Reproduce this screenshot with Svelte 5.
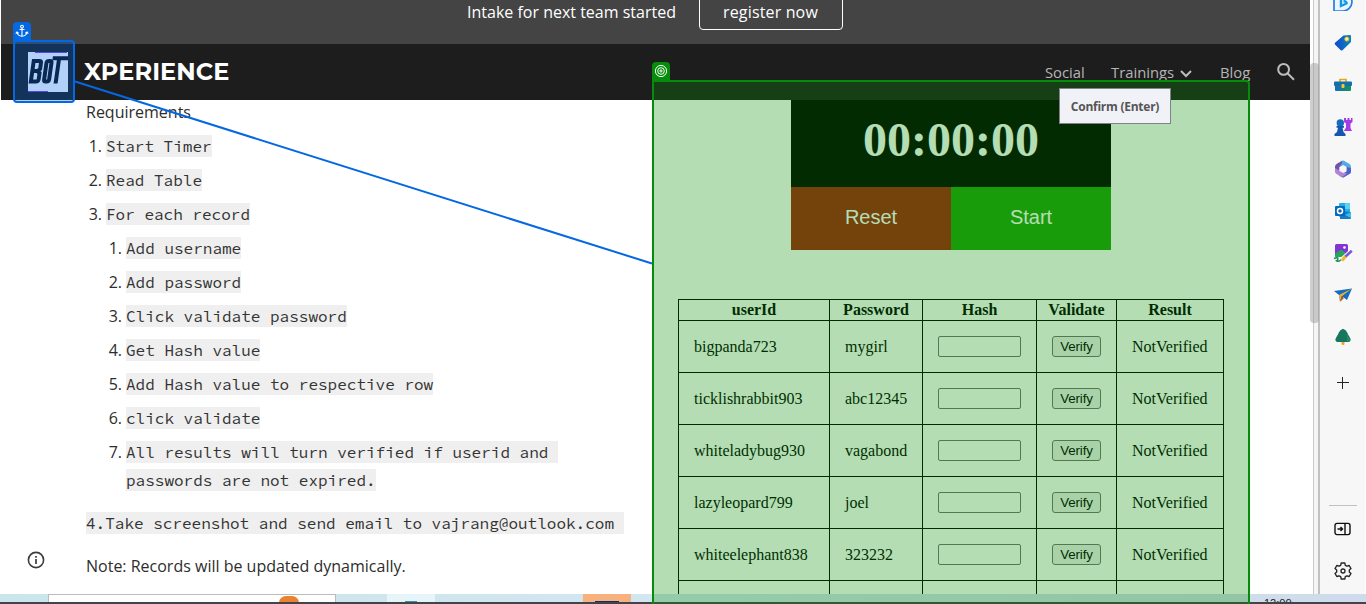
<script>
  const steps = ['Start Timer', 'Read Table', 'For each record'];
  const substeps = [
    ['Add username'], ['Add password'], ['Click validate password'], ['Get Hash value'],
    ['Add Hash value to respective row'], ['click validate'],
    ['All results will turn verified if userid and ', 'passwords are not expired.']
  ];
  const records = [
    ['bigpanda723', 'mygirl'], ['ticklishrabbit903', 'abc12345'], ['whiteladybug930', 'vagabond'],
    ['lazyleopard799', 'joel'], ['whiteelephant838', '323232']
  ];
</script>

<div class="screen">
  <div class="window">
    <main class="page">
      <div class="banner"><span>Intake for next team started</span><button class="register">register now</button></div>
      <nav>
        <svg class="logo" width="40" height="40" viewBox="0 0 40 40">
          <rect width="40" height="40" fill="#fff"/>
          <path d="M7 .5H39M0 39.5H20" stroke="#8b30f5"/>
          <g fill="none" stroke="#0d0d15" stroke-width="4" transform="translate(1.5 0) skewX(-8)">
            <path d="M5.5 8V29.5H10.5Q13 29.5 13 27V21L10.5 19L13 17V11Q13 9 11 9H3.5M5.5 19H11"/>
            <path d="M18.5 11V27.5Q18.5 29.5 20.5 29.5H21.5Q23.5 29.5 23.5 27.5V11Q23.5 9 21.5 9H20.5Q18.5 9 18.5 11Z"/>
            <path d="M24 6.2H40.5M30.5 5V31.5"/>
          </g>
        </svg>
        <b class="brand">XPERIENCE</b>
        <span class="link social">Social</span>
        <span class="link trainings">Trainings</span>
        <svg class="chev" width="14" height="10" viewBox="0 0 14 10"><path d="M2 2L7 7L12 2" fill="none" stroke="#bdbdbd" stroke-width="2"/></svg>
        <span class="link blog">Blog</span>
        <svg class="search" width="20" height="20" viewBox="0 0 20 20" fill="none" stroke="#bdbdbd" stroke-width="2"><circle cx="7.6" cy="7.4" r="5.4"/><path d="M11.5 11.3L18 17.8"/></svg>
      </nav>
      <div class="content">
        <section class="text">
          <p>Requirements</p>
          <ol>
            {#each steps as step, i}<li><span class="num">{i + 1}.</span><div><code>{step}</code></div></li>{/each}
          </ol>
          <ol class="sub">
            {#each substeps as lines, i}
              <li><span class="num">{i + 1}.</span><div>{#each lines as line}<div><code>{line}</code></div>{/each}</div></li>
            {/each}
          </ol>
          <p class="mail"><code>{'4.Take screenshot and send email to vajrang@outlook.com '}</code></p>
          <p class="note">Note: Records will be updated dynamically.</p>
        </section>
        <section class="work">
          <div class="timer">
            <div class="time">00:00:00</div>
            <div class="controls"><button class="reset">Reset</button><button class="start">Start</button></div>
          </div>
          <table>
            <colgroup><col style:width="151px"><col style:width="93px"><col style:width="114px"><col style:width="80px"><col style:width="108px"></colgroup>
            <thead><tr><th>userId</th><th>Password</th><th>Hash</th><th>Validate</th><th>Result</th></tr></thead>
            <tbody>
              {#each records as [user, pass]}
                <tr><td>{user}</td><td>{pass}</td><td><input aria-label="Hash"></td><td><button class="verify">Verify</button></td><td>NotVerified</td></tr>
              {/each}
              <tr><td></td><td></td><td></td><td></td><td></td></tr>
            </tbody>
          </table>
        </section>
      </div>
      <svg class="info" width="18" height="18" viewBox="0 0 18 18"><circle cx="9" cy="9" r="7.6" fill="none" stroke="#3c3c3c" stroke-width="1.6"/><path d="M9 8V13M9 5V6.7" stroke="#3c3c3c" stroke-width="1.7"/></svg>
    </main>
    <div class="scroll"><div class="thumb"></div></div>
    <aside>
      <div class="ic"><svg width="20" height="20" viewBox="0 0 20 20"><path d="M1 20V10A9 9 0 1 1 10 20Z" fill="#e9f7ff" stroke="#2a7de0" stroke-width="1.7"/><path d="M8 4V15L13.5 12.5Q14 10.5 10.5 10" fill="none" stroke="#1596e8" stroke-width="2.4"/></svg></div>
      <div class="ic"><svg width="18" height="18" viewBox="0 0 18 18"><defs><linearGradient id="tag"><stop stop-color="#1048cf"/><stop offset="1" stop-color="#0a86b8"/></linearGradient></defs><path d="M9.5 1.5L16 1Q17 1 17 2V8L8.5 16.3Q7.5 17 6.5 16L1 10.6Q.3 9.7 1 8.8Z" fill="url(#tag)"/><circle cx="12.8" cy="5.1" r="2" fill="#fff0a0" stroke="#f3bd20"/></svg></div>
      <div class="ic"><svg width="18" height="16" viewBox="0 0 18 16"><defs><linearGradient id="box"><stop stop-color="#176bc0"/><stop offset="1" stop-color="#12935b"/></linearGradient></defs><path d="M6 5V2.5H12V5" fill="none" stroke="#e5a61b" stroke-width="1.7"/><path d="M1 8H17V13Q17 14 16 14H2Q1 14 1 13Z" fill="url(#box)"/><rect y="4.5" width="18" height="4.5" rx="1" fill="#1271a9"/><rect x="7.5" y="7" width="3" height="4" rx="1" fill="#ffc52d"/></svg></div>
      <div class="ic"><svg width="20" height="20" viewBox="0 0 20 20"><path d="M11 1H13V3H14.5V1H16.5V3H18V1H19.5V5L17.5 6.5V11L19 14H10.8L13 10.5V6.5L11 5Z" fill="#a43be6"/><circle cx="7.3" cy="6" r="3.7" fill="#1769bd"/><path d="M3.5 9H11V10.7H9.5L10.5 15L12.5 17V19H1.5V17L4 15L5 10.7H3.5Z" fill="#1457b1"/></svg></div>
      <div class="ic"><svg width="18" height="18" viewBox="0 0 18 18"><path d="M8 .7L2.5 4Q1 5 1 7V12L5.5 10.5V7L12 3Z" fill="#6f55a8"/><path d="M8 .7Q9 .2 10 .7L15.5 4Q17 5 17 7V11L12.5 12V7L9.5 5.2L5.5 7L8 3Z" fill="#55a9e6"/><path d="M17 8V12Q17 13.3 15.5 14L10 17.3Q9 17.8 8 17.3L5 15.4L12.5 11.5V7Z" fill="#4f63c6"/><path d="M1 8V11.5Q1 13 2.5 14L8 17.3L13 13.5L9 12.5L5.5 10.5Z" fill="#b284d6"/><path d="M9 5.3L12.4 7.2V11L9 12.8L5.6 11V7.2Z" fill="#f7f7f7"/></svg></div>
      <div class="ic"><svg width="18" height="18" viewBox="0 0 18 18"><rect x="5" y="1" width="11" height="14" rx="1" fill="#26aee8"/><path d="M11 1H15Q16 1 16 2V7H11Z" fill="#59d2f6"/><path d="M6 9L17 10V16Q17 17 16 17H6Z" fill="#167bc8"/><path d="M17 10V16L11 13Z" fill="#39bdeb"/><rect x="1" y="4" width="10" height="10" rx="1" fill="#0869ba"/><circle cx="6" cy="9" r="2.5" fill="none" stroke="#fff" stroke-width="1.5"/></svg></div>
      <div class="ic"><svg width="20" height="20" viewBox="0 0 20 20"><rect x="2" y="1" width="13" height="13" rx="1.5" fill="#8136d2"/><circle cx="11.5" cy="4.5" r="1.3" fill="#fff"/><path d="M2 13V11L6.5 7.5Q8 6.5 9.5 7.5L14 11V14H3Z" fill="#26a65b"/><path d="M1 14.5H20V20H1Z" fill="#f7f7f7"/><path d="M9 16.5L18.5 8" stroke="#f7f7f7" stroke-width="4.5"/><path d="M12 14L18.8 7.8" stroke="#7957db" stroke-width="2.6"/><path d="M9 17.5L12.5 13.5" stroke="#f2b427" stroke-width="3"/><path d="M1 15.5Q5 14 5 15.5T3.5 17.8Q6 19 8 16.8" fill="none" stroke="#168c54" stroke-width="1.4"/></svg></div>
      <div class="ic"><svg width="18" height="16" viewBox="0 0 18 16"><path d="M0 4L18 1.5L13 13L9 10L6 14L5 8Z" fill="#126cc0"/><path d="M5 8L18 1.5L7.5 9.5L6 15Z" fill="#f3ad32"/><path d="M7.5 9.5L10 11L6 15Z" fill="#a45c25"/></svg></div>
      <div class="ic"><svg width="18" height="18" viewBox="0 0 18 18"><path d="M7.5 12H10.5V16Q10.5 17 9 17T7.5 16Z" fill="#eea52d"/><path d="M9 .8Q12 1.5 13.5 5Q13.5 6 15 8Q17 11 16.5 12.5Q16 14 14 14H4Q2 14 1.5 12.5Q1 11 3 8Q4.5 6 4.5 5Q6 1.5 9 .8Z" fill="#18765f"/><path d="M11 4L16 12Q15.5 13.5 13 13Q14 9 11 4Z" fill="#289168"/></svg></div>
      <div class="ic plus"><svg width="12" height="12" viewBox="0 0 12 12"><path d="M5.5 0V12M0 5.5H12" stroke="#222" stroke-width="1"/></svg></div>
      <hr>
      <div class="ic"><svg width="17" height="14" viewBox="0 0 17 14" fill="none" stroke="#101010" stroke-width="1.4"><rect x="1" y="1.4" width="15" height="11.2" rx="2"/><path d="M11 1.5V12.5M3.5 7H8.5M6.5 5L8.5 7L6.5 9"/></svg></div>
      <div class="ic"><svg width="18" height="18" viewBox="0 0 18 18" fill="none" stroke="#262626" stroke-width="1.35" stroke-linejoin="round"><path d="M7.2 1H10.8L11.3 3.3L13 4.2L15.2 3.5L17 6.6L15.3 8.1V9.9L17 11.4L15.2 14.5L13 13.8L11.3 14.7L10.8 17H7.2L6.7 14.7L5 13.8L2.8 14.5L1 11.4L2.7 9.9V8.1L1 6.6L2.8 3.5L5 4.2L6.7 3.3Z"/><circle cx="9" cy="9" r="2"/></svg></div>
    </aside>
  </div>
  <footer>
    <div class="find"><i></i></div><div class="app"><i></i></div><div class="orange"><i></i></div><div class="clock">12:00</div>
  </footer>

  <svg class="connector" width="1366" height="604"><path d="M75 81.5L652 263.5" stroke="#0468e2" stroke-width="2"/></svg>
  <div class="anchor">
    <div class="tab"><svg width="14" height="14" viewBox="0 0 14 14" fill="none" stroke="#fff" stroke-width="1.1"><circle cx="7" cy="2.6" r="1.4"/><path d="M7 4V12.3M4.5 5.5H9.5M2 8Q2.5 11.8 7 12.3Q11.5 11.8 12 8M.8 9.6L2 8L3.6 9.2M10.4 9.2L12 8L13.2 9.6"/></svg></div>
  </div>
  <div class="target">
    <div class="tab"><svg width="14" height="14" viewBox="0 0 14 14" fill="none" stroke="#fff" stroke-width="1"><circle cx="7" cy="7" r="5.6"/><circle cx="7" cy="7" r="3.3"/><circle cx="7" cy="7" r="1.1"/></svg></div>
  </div>
  <div class="tip">Confirm (Enter)</div>
</div>

<style>
  :global(body) { margin: 0; background: #fff; }
  .screen, .screen * { box-sizing: border-box; }
  .screen { position: relative; width: 1366px; height: 604px; overflow: hidden; background: #fff; font-family: "Open Sans", sans-serif; }
  svg { display: block; flex: none; }
  button { font-family: "Liberation Sans", sans-serif; margin: 0; padding: 0; }
  .window { display: flex; height: 594px; padding: 0 1px; overflow: hidden; }
  .page { position: relative; width: 1309px; flex: none; overflow: hidden; }
  .banner { height: 44px; background: #444; color: #fff; font-size: 16px; display: flex; align-items: flex-start; padding-left: 466px; line-height: 24px; white-space: nowrap; }
  .banner span { width: 232px; flex: none; }
  .register { width: 144px; height: 34px; margin-top: -4px; border: 1px solid #fff; border-radius: 4px; background: none; color: #fff; font: 16px/24px "Open Sans", sans-serif; padding: 0 1px 2px 0; letter-spacing: .15px; }
  nav { height: 56px; background: #1d1d1d; display: flex; align-items: center; padding-left: 27px; white-space: nowrap; }
  .brand { width: 961px; margin: -2px 0 0 16px; color: #fff; font: 700 24px Montserrat, Inter, sans-serif; letter-spacing: .1px; }
  .link { color: #b5b5b5; font-size: 14.8px; line-height: 24px; flex: none; }
  .social { width: 66px; }
  .trainings { width: 67px; }
  .chev { margin: 3px 0 0 1px; }
  .blog { margin-left: 27px; width: 30px; }
  .search { margin-left: 26px; }
  .content { display: flex; height: 494px; overflow: hidden; }
  .text { width: 651px; flex: none; padding-left: 85px; color: #2d2d2d; font-size: 16px; line-height: 28px; }
  p { margin: -2px 0 6px; height: 28px; white-space: nowrap; }
  ol { list-style: none; margin: 0 0 6px; padding: 0; display: flex; flex-direction: column; gap: 6px; }
  .sub { padding-left: 20px; margin: 0; }
  li { display: flex; }
  .num { width: 16px; margin-right: 4px; display: flex; justify-content: flex-end; }
  li div { height: auto; min-height: 28px; }
  code { font: 16px/18px "Source Code Pro", "Liberation Mono", monospace; background: #efefef; white-space: pre; padding: 1px 0; color: #333; }
  .mail { margin: 15px 0 15px; }
  .note { margin: 0; }
  .work { width: 598px; flex: none; display: flex; flex-direction: column; align-items: center; font-family: "Liberation Serif", serif; color: #000; }
  .timer { width: 320px; }
  .time { height: 87px; background: #000; color: #fff; font-weight: 700; font-size: 48px; line-height: 79px; text-align: center; }
  .controls { display: flex; }
  .controls button { width: 160px; height: 63px; border: 0; color: #fff; font-size: 20px; padding-bottom: 2px; }
  .controls .reset { background: #a4210d; }
  .controls .start { background: #22a30b; }
  table { table-layout: fixed; width: 546px; margin-top: 49px; border-spacing: 0; font-size: 16px; flex: none; }
  th, td { border-left: 1px solid #000; border-top: 1px solid #000; padding: 0; line-height: 18px; }
  th:last-child, td:last-child { border-right: 1px solid #000; }
  th { height: 21px; }
  td { height: 52px; padding-left: 15px; vertical-align: middle; }
  input { display: block; width: 83px; height: 21px; border: 1px solid #6f7173; border-radius: 2px; background: #fff; padding: 0; }
  .verify { display: block; width: 49px; height: 21px; border: 1px solid #6f7173; border-radius: 3px; background: #efefef; font-size: 13.333px; letter-spacing: -.1px; line-height: 18px; }
  .info { position: absolute; left: 26px; top: 551px; }
  .scroll { width: 10px; flex: none; background: #f5f5f5; border-left: 3px solid #fff; border-right: 2px solid #c1c1c1; box-shadow: inset 1px 0 #cacaca; padding-top: 63px; }
  .thumb { width: 9px; height: 260px; margin-left: -3px; border-radius: 4px; background: rgba(150, 150, 150, .47); }
  aside { width: 45px; background: #f7f7f7; display: flex; flex-direction: column; align-items: center; }
  .ic { width: 46px; height: 42px; flex: none; display: flex; align-items: center; justify-content: center; }
  .ic:first-child { margin-top: -20px; }
  .plus { margin-top: 4px; }
  hr { width: 28px; height: 1px; margin: 101px 0 2px; border: 0; background: #c1c1c1; flex: none; }
  footer { height: 10px; display: flex; padding-left: 48px; overflow: hidden; border-bottom: 2px solid #45434a; background: linear-gradient(90deg, #cbe5ed, #d2e6f0 50%, #cfdbea); }
  .find { width: 288px; border: 1px solid #bbb; border-bottom: 0; background: #fff; padding: 1px 0 0 230px; }
  .find i { display: block; width: 20px; height: 14px; border-radius: 9px; background: #e98331; }
  .app { width: 48px; margin-left: 51px; background: #e8f5f8; padding: 7px 18px 0; }
  .app i { display: block; height: 1px; background: #3295a8; }
  .orange { width: 48px; margin-left: 148px; background: #f7b17e; padding: 7px 12px 0; }
  .orange i { display: block; height: 1px; background: #102f68; }
  .clock { margin-left: 633px; font: 11px/11px "Liberation Sans", sans-serif; padding-top: 4px; color: #222; }
  .connector { position: absolute; left: 0; top: 0; }
  .anchor { position: absolute; left: 13px; top: 40px; width: 62px; height: 63px; border: 2px solid #0468e2; border-radius: 4px; background: rgba(0, 102, 233, .3); }
  .tab { position: absolute; width: 18px; height: 20px; display: flex; justify-content: center; padding-top: 2px; }
  .anchor .tab { left: -2px; top: -20px; background: #0468e2; border-radius: 4px 4px 0 0; }
  .target { position: absolute; left: 652px; top: 80px; width: 598px; height: 530px; border: 2px solid #068c0b; border-radius: 0 4px 0 0; background: rgba(7, 143, 7, .3); }
  .target .tab { left: -2px; top: -20px; background: #068c0b; border-radius: 4px 4px 0 0; }
  .tip { position: absolute; left: 1059px; top: 88px; width: 112px; height: 36px; border: 1px solid #818187; background: #f1f2f8; color: #555; font-size: 12px; letter-spacing: -.25px; font-weight: 700; line-height: 36px; text-align: center; white-space: nowrap; }
</style>
